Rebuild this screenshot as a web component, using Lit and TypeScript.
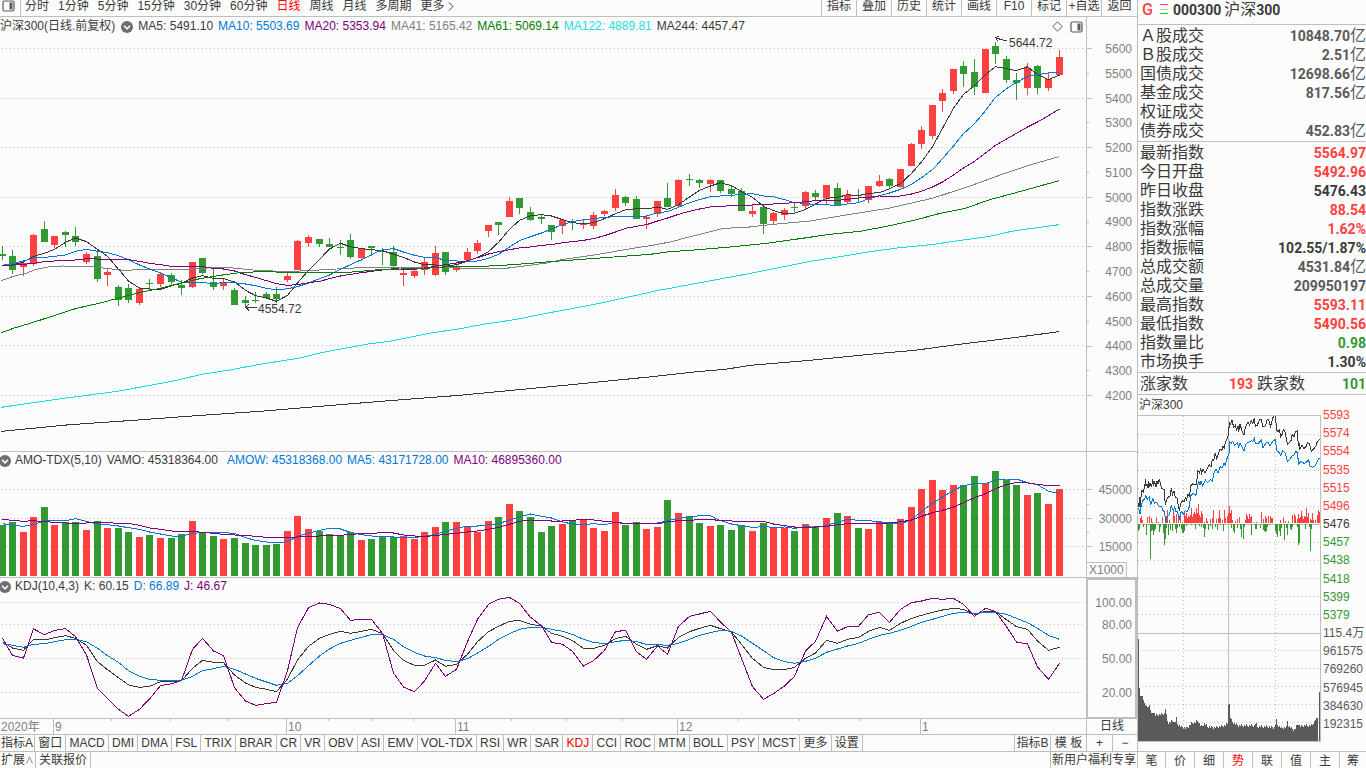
import { LitElement, html, svg, css } from "lit";
import { customElement, property } from "lit/decorators.js";
import { classMap } from "lit/directives/class-map.js";

// Plot coordinates are stored in thirds of a pixel, counted from the top of the window.
const STEP = 10.57;
const xAt = (i: number) => Math.floor(2 + i * STEP) * 3 + 1.5;

type Candle = ["R" | "G", number, number, number, number];

const parseCandles = (s: string): Candle[] =>
  s.trim().split(/\s+/).map((t) => {
    const [h, l, a, b] = t.slice(1).split(",").map(Number);
    return [t[0] as "R" | "G", h, l, a, b];
  });

// direction, high, low, body top, body bottom
const CANDLES = parseCandles(`
G738,780,762,768 G750,822,768,810 R786,827,789,801 R702,797,705,792 G663,726,687,726
R708,743,708,735 G693,740,696,705 G681,738,708,726 R756,792,762,786 G748,846,768,837
R806,858,816,825 G855,918,861,900 G852,909,864,900 R865,915,867,909 G837,870,849,852
R819,862,822,852 G818,855,825,846 G840,885,855,864 R786,864,786,861 G774,822,774,819
G805,870,846,861 R836,870,849,858 G864,915,870,915 G888,922,900,909 G876,909,900,903
G876,894,882,894 G861,910,882,897 R819,846,828,840 R720,810,723,810 R705,741,711,729
G717,741,717,732 G714,741,732,741 G720,765,741,744 G702,777,720,771 R744,783,744,774
G738,768,738,744 G744,795,753,756 G738,801,756,798 R810,858,819,825 R807,834,813,828
R772,825,786,810 R738,828,759,825 G756,825,756,816 R786,816,798,810 R744,780,756,780
R720,762,729,753 R675,711,675,693 G666,705,666,675 R591,651,603,651 G594,642,594,624
G621,663,636,660 G645,672,651,657 G675,720,675,696 R657,702,660,678 G657,690,663,669
R657,687,672,675 R636,687,645,678 R630,648,633,642 R567,633,585,624 G588,618,591,609
G588,657,597,657 R645,687,651,657 R603,651,603,642 G549,621,594,621 R537,621,540,618
G522,558,537,540 G537,564,540,549 R537,576,540,552 G540,579,540,573 G558,591,567,582
G564,633,573,633 R615,651,633,642 G615,702,621,672 R636,672,639,663 R624,660,630,645
G609,636,621,624 R573,627,576,618 G570,604,579,591 R555,612,555,594 G549,618,564,615
R570,612,585,606 G567,606,585,588 R558,609,558,600 R525,561,543,558 G534,564,537,558
R507,564,507,561 R429,498,432,498 R378,447,390,432 R315,417,315,408 R267,336,279,303
R207,282,207,273 G183,261,198,222 G177,285,216,261 R147,279,147,279 G126,192,138,162
G168,249,177,240 G219,300,240,249 R189,285,204,264 G195,282,198,264 R219,273,237,265
R150,225,171,225`);

const nums = (s: string) => s.trim().split(/[\s,]+/).map(Number);
const shift = (a: number[], d: number) => a.map((v) => v + d);

const VOL_TOPS = shift(nums(`240,231,261,216,186,240,231,232,255,228,249,249,261,276,270,279,279,267,228,263,
273,282,279,294,300,300,297,258,213,252,258,267,272,261,285,282,277,277,273,282,
261,246,231,231,245,260,228,216,177,198,216,261,243,237,228,225,249,258,201,240,
231,252,246,165,204,213,234,243,240,255,240,258,234,249,249,258,237,243,219,204,
213,249,252,231,231,222,186,132,105,135,120,120,93,114,78,105,120,150,144,177,132`), 1335);

const J = shift(nums(`580,631,639,552,569,556,551,575,630,730,760,793,814,793,762,722,716,707,613,580,
618,632,728,768,781,776,772,677,548,488,474,478,491,526,523,523,565,684,726,740,
708,655,694,673,590,523,478,463,457,475,517,542,592,598,619,663,647,616,560,556,
620,643,603,628,544,514,507,499,531,562,640,725,763,746,723,694,618,589,514,559,
545,544,509,502,532,493,473,468,460,463,460,478,514,490,499,545,591,597,666,703,655`), 1335);

const K = shift(nums(`590,609,616,583,585,578,572,580,601,650,674,698,720,727,724,710,710,707,670,646,
652,653,690,714,727,733,740,702,645,604,580,568,559,565,559,553,566,616,646,661,
661,645,664,658,628,590,560,544,529,526,538,543,565,574,587,610,610,601,581,574,
598,613,602,609,577,560,550,541,551,561,598,640,667,674,674,667,640,624,586,595,
583,577,559,547,556,535,520,511,502,495,490,493,508,499,500,524,545,553,588,616,607`), 1335);

const D = shift(nums(`596,601,607,598,596,590,584,583,590,610,632,652,677,694,703,706,706,706,694,677,
671,664,673,687,700,711,721,715,692,662,633,612,595,586,577,569,569,583,605,622,
633,638,646,650,641,624,604,583,566,553,547,547,553,559,568,583,592,596,590,586,
590,598,599,601,595,583,571,563,556,559,573,595,617,638,650,655,649,640,622,612,
603,595,583,571,565,556,544,532,523,514,505,502,506,502,502,508,520,533,550,571,583`), 1335);

const average = (values: number[], n: number, head: number[]) =>
  values.map((_, i) =>
    i < n - 1 ? head[i] : values.slice(i - n + 1, i + 1).reduce((a, b) => a + b, 0) / n
  );

const CLOSES = CANDLES.map(([dir, , , top, bottom]) => (dir === "R" ? top : bottom));
const MA5 = average(CLOSES, 5, [795, 795, 786, 769]);
const MA10 = average(CLOSES, 10, [796, 790, 783, 774, 772, 769, 765, 754, 748]);
const MA20 = average(CLOSES, 20, [797, 795, 793, 790, 785, 783, 781, 780, 776, 777, 777, 778, 779, 784, 790, 794, 799, 799, 800]);
const VMA5 = average(VOL_TOPS, 5, shift([236, 241, 244, 239], 1335));
const VMA10 = average(VOL_TOPS, 10, shift([223, 226, 229, 227, 230, 232, 234, 235, 234], 1335));

const MA41 = "4,842 40,829 75,821 105,809 150,800 190,798 265,799 310,804 370,811 450,808 560,808 650,802 700,804 760,810 860,815 940,811 1010,807 1080,803 1380,804 1510,806 1580,797 1640,789 1690,778 1790,764 1880,748 1950,737 2010,726 2090,705 2170,685 2240,682 2300,675 2430,663 2520,648 2670,624 2800,594 2910,558 3020,518 3090,495 3177,470";
const MA61 = "4,998 40,985 100,967 180,941 230,925 300,909 365,892 420,877 480,865 540,850 600,836 660,826 720,818 800,814 840,817 900,818 1030,818 1080,814 1150,808 1260,806 1350,800 1450,799 1540,794 1650,785 1800,774 1950,763 2010,755 2070,751 2180,742 2300,730 2400,716 2490,703 2580,694 2670,677 2750,659 2820,640 2895,625 2970,599 3070,572 3177,542";
const MA122 = "4,1222 190,1195 300,1181 363,1172 516,1144 610,1122 684,1111 779,1093 894,1075 978,1055 1105,1032 1168,1024 1294,999 1380,986 1450,973 1550,958 1650,938 1800,910 1880,892 1910,886 1970,872 2010,865 2090,850 2230,824 2350,800 2430,784 2490,775 2610,755 2700,743 2800,733 2890,720 2970,709 3030,695 3060,690 3177,674";
const MA244 = "4,1294 210,1274 400,1261 589,1247 779,1234 947,1220 1168,1202 1378,1186 1641,1161 1755,1150 1966,1129 2081,1116 2176,1108 2250,1096 2429,1081 2618,1062 2744,1051 2870,1034 3050,1012 3177,995";

const toPoints = (ys: number[]) => ys.map((y, i) => `${xAt(i)},${Math.round(y)}`).join(" ");

const line = (points: string, tone: string) => svg`<polyline class="line ${tone}" points=${points}></polyline>`;
const gridLines = (ys: number[], width: number) =>
  ys.map((y) => svg`<line class="grid" x1="6" x2=${width} y1=${y} y2=${y}></line>`);

const chartColors = css`
  .line { fill: none; stroke-width: 1; vector-effect: non-scaling-stroke; shape-rendering: crispEdges; }
  .dark { stroke: #3a3a3a; }
  .blue { stroke: #0078d4; }
  .purple { stroke: #800080; }
  .gray { stroke: #808080; }
  .green { stroke: #008000; }
  .cyan { stroke: #1edcdc; }
  .grid { stroke: #bebebe; stroke-width: 1; stroke-dasharray: 1 3; vector-effect: non-scaling-stroke; shape-rendering: crispEdges; }
  .rule { stroke: #bebebe; stroke-width: 1; vector-effect: non-scaling-stroke; shape-rendering: crispEdges; }
  .bar { shape-rendering: crispEdges; }
  .up { fill: #ff4040; }
  .down { fill: #339933; }
  .ink { fill: #5a5a5a; }
`;

const controls = css`
  :host { box-sizing: border-box; }
  *, *::before, *::after { box-sizing: border-box; }
  button {
    font: inherit; color: inherit; background: none; border: 0; margin: 0; padding: 0;
    white-space: nowrap; cursor: pointer; line-height: 14px;
  }
  .active { color: #ff0000; }
`;

const chevron = html`<svg width="12" height="12" viewBox="0 0 12 12" aria-hidden="true">
  <circle cx="6" cy="6" r="6" fill="#6e6e6e"></circle>
  <path d="M3 4.8 L6 7.8 L9 4.8" fill="none" stroke="#fff" stroke-width="1.6"></path>
</svg>`;

const paneIcon = html`<svg width="13" height="12" viewBox="0 0 13 12" aria-hidden="true">
  <rect x="1" y="1" width="11" height="10" rx="1.5" fill="none" stroke="#5a5a5a" stroke-width="1.2"></rect>
  <rect x="7.5" y="2.5" width="3" height="7" fill="#5a5a5a"></rect>
</svg>`;

@customElement("top-toolbar")
class TopToolbar extends LitElement {
  static styles = [controls, css`
    :host { display: flex; height: 17px; border-bottom: 1px solid #bebebe; overflow: hidden; }
    .pane { width: 21px; border-right: 1px solid #bebebe; padding: 0 5px 4px 2px; display: flex; align-items: center; }
    .periods { display: flex; gap: 9px; padding: 0 4px; flex: 1; align-items: flex-start; }
    .periods button, .actions button { height: 16px; padding-bottom: 4px; line-height: 12px; }
    .actions { display: flex; }
    .actions button { width: 35px; border-left: 1px solid #bebebe; text-align: center; }
    .actions button:last-child { width: 36px; }
    .more { display: flex; gap: 3px; align-items: center; }
  `];
  render() {
    const periods = ["分时", "1分钟", "5分钟", "15分钟", "30分钟", "60分钟", "日线", "周线", "月线", "多周期"];
    const actions = ["指标", "叠加", "历史", "统计", "画线", "F10", "标记", "+自选", "返回"];
    return html`
      <button class="pane" aria-label="侧栏">${paneIcon}</button>
      <nav class="periods">
        ${periods.map((p) => html`<button class=${classMap({ active: p === "日线" })}>${p}</button>`)}
        <button class="more">更多
          <svg width="6" height="9" viewBox="0 0 6 9" aria-hidden="true"><path d="M1 .5 L5 4.5 L1 8.5" fill="none" stroke="#3a3a3a"></path></svg>
        </button>
      </nav>
      <nav class="actions">${actions.map((a) => html`<button>${a}</button>`)}</nav>
    `;
  }
}

@customElement("chart-legend")
class ChartLegend extends LitElement {
  @property({ attribute: false }) items: Array<[string, string]> = [];
  @property() name = "";
  @property({ type: Boolean }) lead = false;
  static styles = [controls, css`
    :host { display: flex; align-items: center; gap: 5px; height: 17px; white-space: nowrap; line-height: 17px; min-width: 0; }
    .toggle { display: flex; flex: none; margin-left: -1px; margin-right: -1px; }
    .toggle.lead { margin-left: 1px; margin-right: 0; order: 1; }
    .name { order: 1; }
    .lead-name { order: 0; }
    .value { order: 2; }
    .wide { margin-left: 4px; }
    .blue { color: #0078d4; }
    .purple { color: #800080; }
    .gray { color: #808080; }
    .green { color: #008000; }
    .cyan { color: #1edcdc; }
  `];
  render() {
    return html`
      <button class=${classMap({ toggle: true, lead: this.lead })} aria-label="展开">${chevron}</button>
      <span class=${this.lead ? "lead-name" : "name"}>${this.name}</span>
      ${this.items.map(([text, tone]) => html`<span class="value ${tone}">${text}</span>`)}
    `;
  }
}

@customElement("price-panel")
class PricePanel extends LitElement {
  static styles = [chartColors, controls, css`
    :host { display: grid; position: relative; min-height: 0; min-width: 0; grid-template: minmax(0, 1fr) / minmax(0, 1fr); overflow: hidden; }
    .plot { grid-area: 1 / 1; width: 100%; height: 100%; display: block; }
    .head { grid-area: 1 / 1; align-self: start; display: flex; justify-content: space-between; padding: 1px 3px 0 0; height: 18px; }
    .tools { display: flex; gap: 7px; align-items: center; }
    .tools button { display: flex; }
    .note { position: absolute; transform: translateY(-50%); line-height: 14px; }
  `];
  render() {
    const items: Array<[string, string]> = [
      ["MA5: 5491.10", "dark"], ["MA10: 5503.69", "blue"], ["MA20: 5353.94", "purple"], ["MA41: 5165.42", "gray"],
      ["MA61: 5069.14", "green"], ["MA122: 4889.81", "cyan"], ["MA244: 4457.47", "dark"],
    ];
    const notes = [
      { text: "4554.72", x: 258, y: 309 },
      { text: "5644.72", x: 1009, y: 43 },
    ];
    return html`
      <svg class="plot" viewBox="0 51 3258 1302" preserveAspectRatio="none" role="img" aria-label="K线图">
        ${gridLines([145.5, 295.5, 442.5, 592.5, 739.5, 889.5, 1036.5, 1186.5], 3258)}
        ${CANDLES.map(([dir, high, low, top, bottom], i) => {
          const x = xAt(i);
          const tone = dir === "R" ? "bar up" : "bar down";
          return svg`
            <rect class=${tone} x=${x - 1.5} y=${high} width="3" height=${low - high}></rect>
            <rect class=${tone} x=${x - 10.5} y=${top} width="21" height=${Math.max(3, bottom - top)}></rect>`;
        })}
        ${line(MA41, "gray")} ${line(toPoints(MA5), "dark")} ${line(toPoints(MA10), "blue")}
        ${line(toPoints(MA20), "purple")} ${line(MA61, "green")} ${line(MA122, "cyan")} ${line(MA244, "dark")}
        ${line("771,922 735,922", "dark")} ${line("747,913 736,922 747,931", "dark")}
        ${line("3021,123 2987,114", "dark")} ${line("2997,108 2987,113 2992,123", "dark")}
      </svg>
      <div class="head">
        <chart-legend lead .name=${"沪深300(日线.前复权)"} .items=${items}></chart-legend>
        <div class="tools">
          <button aria-label="标记"><svg width="11" height="11" viewBox="0 0 11 11"><path d="M5.5 .8 L10.2 5.5 L5.5 10.2 L.8 5.5 Z" fill="none" stroke="#5a5a5a"></path></svg></button>
          <button aria-label="侧栏">${paneIcon}</button>
        </div>
      </div>
      ${notes.map((n) => html`<span class="note" style="left:${(n.x / 1086) * 100}%;top:${((n.y - 17) / 434) * 100}%">${n.text}</span>`)}
    `;
  }
}

@customElement("volume-panel")
class VolumePanel extends LitElement {
  static styles = [chartColors, controls, css`
    :host { display: grid; min-height: 0; min-width: 0; grid-template: minmax(0, 1fr) / minmax(0, 1fr); overflow: hidden; }
    .plot { grid-area: 1 / 1; width: 100%; height: 100%; display: block; }
    chart-legend { grid-area: 1 / 1; align-self: start; }
  `];
  render() {
    const items: Array<[string, string]> = [
      ["VAMO: 45318364.00", "dark"], ["AMOW: 45318368.00", "blue wide"], ["MA5: 43171728.00", "blue"], ["MA10: 46895360.00", "purple"],
    ];
    return html`
      <svg class="plot" viewBox="0 1356 3258 375" preserveAspectRatio="none" role="img" aria-label="成交额">
        ${gridLines([1468.5, 1555.5, 1639.5], 3258)}
        ${VOL_TOPS.map((top, i) => svg`<rect class=${CANDLES[i][0] === "R" ? "bar up" : "bar down"} x=${xAt(i) - 10.5} y=${top} width="21" height=${1728 - top}></rect>`)}
        ${line(toPoints(VMA5), "blue")} ${line(toPoints(VMA10), "purple")}
      </svg>
      <chart-legend .name=${"AMO-TDX(5,10)"} .items=${items}></chart-legend>
    `;
  }
}

@customElement("kdj-panel")
class KdjPanel extends LitElement {
  static styles = [chartColors, controls, css`
    :host { display: grid; min-height: 0; min-width: 0; grid-template: minmax(0, 1fr) / minmax(0, 1fr); overflow: hidden; }
    .plot { grid-area: 1 / 1; width: 100%; height: 100%; display: block; }
    chart-legend { grid-area: 1 / 1; align-self: start; }
  `];
  render() {
    const items: Array<[string, string]> = [["K: 60.15", "dark"], ["D: 66.89", "blue"], ["J: 46.67", "purple"]];
    return html`
      <svg class="plot" viewBox="0 1734 3258 420" preserveAspectRatio="none" role="img" aria-label="KDJ">
        ${gridLines([1807.5, 1873.5, 1975.5, 2077.5], 3249)}
        ${line(toPoints(K), "dark")} ${line(toPoints(D), "blue")} ${line(toPoints(J), "purple")}
      </svg>
      <chart-legend .name=${"KDJ(10,4,3)"} .items=${items}></chart-legend>
    `;
  }
}

@customElement("time-axis")
class TimeAxis extends LitElement {
  static styles = [chartColors, controls, css`
    :host { display: grid; min-width: 0; grid-template: minmax(0, 1fr) / minmax(0, 1fr); overflow: hidden; color: #808080; }
    .months { grid-area: 1 / 1; display: grid; grid-template-columns: 53fr 233fr 169fr 222fr 243fr 166fr; line-height: 16px; }
    .months span { border-left: 1px solid #bebebe; padding-left: 1px; }
    .months span:first-child { border-left: 0; }
    .ticks { grid-area: 1 / 1; width: 100%; height: 2px; display: block; }
  `];
  render() {
    const ticks = [111, 170, 228, 328, 371, 413, 511, 566, 622, 738, 799, 859];
    return html`
      <div class="months">${["2020年", "9", "10", "11", "12", "1"].map((m) => html`<span>${m}</span>`)}</div>
      <svg class="ticks" viewBox="0 0 1086 2" preserveAspectRatio="none" aria-hidden="true">
        ${ticks.map((x) => svg`<line class="rule" x1=${x + 0.5} x2=${x + 0.5} y1="0" y2="2"></line>`)}
      </svg>
    `;
  }
}

@customElement("indicator-tabs")
class IndicatorTabs extends LitElement {
  static styles = [controls, css`
    :host { display: flex; justify-content: space-between; min-width: 0; overflow: hidden; }
    .set { display: flex; flex: 0 1 863px; }
    .set button { flex: 1 0 auto; padding: 0 3px; border-right: 1px solid #bebebe; }
    .set button:first-child { flex-grow: 0; padding: 0 1px; }
    .end { display: flex; }
    .end button { width: 36px; border-left: 1px solid #bebebe; }
    button { height: 16px; line-height: 16px; }
  `];
  render() {
    const names = ["指标A", "窗口", "MACD", "DMI", "DMA", "FSL", "TRIX", "BRAR", "CR", "VR", "OBV", "ASI", "EMV", "VOL-TDX",
      "RSI", "WR", "SAR", "KDJ", "CCI", "ROC", "MTM", "BOLL", "PSY", "MCST", "更多", "设置"];
    return html`
      <nav class="set">${names.map((n) => html`<button class=${classMap({ active: n === "KDJ" })}>${n}</button>`)}</nav>
      <div class="end"><button>指标B</button><button>模 板</button></div>
    `;
  }
}

const PRICE_BLACK = "8,280 9,292 12,262 12,285 15,262 18,240 22,246 26,228 29,208 30,228 33,222 36,234 38,212 41,232 44,222 47,230 50,206 53,228 56,214 60,230 63,212 66,222 70,208 74,226 78,236 84,238 86,262 88,285 92,268 96,262 102,258 106,233 109,254 114,242 118,262 124,264 127,290 130,298 134,282 138,272 144,276 148,264 152,270 156,252 160,258 165,226 170,222 180,224 184,200 186,182 190,188 194,176 197,190 201,178 207,188 212,178 220,164 225,172 229,148 233,152 238,128 242,146 248,128 252,118 257,122 261,108 265,114 268,98 274,85 278,72 280,35 282,46 288,30 293,52 298,46 302,60 306,48 308,65 312,43 318,62 324,74 328,52 336,36 341,46 346,32 351,40 355,24 358,50 364,46 370,30 376,28 380,50 388,48 394,28 398,30 404,50 410,24 416,16 419,16 421,60 426,64 430,60 434,80 438,74 442,58 448,68 454,103 460,98 466,90 468,74 474,80 478,66 484,62 487,108 490,100 492,118 498,106 504,116 512,108 514,98 520,100 526,124 534,116 540,108 544,94 551,88";
const PRICE_BLUE = "8,295 12,312 12,285 15,290 20,272 26,268 29,254 33,268 40,260 44,284 50,266 56,280 62,276 68,288 76,290 82,304 86,306 89,338 94,320 100,314 106,288 112,302 116,290 120,306 124,304 130,326 136,304 142,312 148,302 154,304 160,290 164,258 172,250 180,256 184,230 188,212 192,226 195,214 200,228 208,210 214,218 224,208 229,214 234,190 240,178 246,188 252,170 258,174 264,160 268,164 274,142 279,130 281,95 286,100 290,94 296,106 304,98 308,110 312,98 318,112 324,122 330,102 338,96 346,92 350,94 355,84 358,102 366,100 376,90 381,114 390,98 396,96 402,108 410,94 418,88 422,122 430,128 434,136 440,122 448,130 454,154 462,148 468,138 474,136 480,124 484,128 488,162 496,154 504,160 512,156 518,150 522,168 530,172 538,168 542,158 548,146 551,146";
const UP_BARS = nums(`12,16 15,22 18,8 33,18 39,22 45,16 48,4 60,18 66,4 78,18 90,22 93,38 99,8 111,42 114,20 120,28 126,18 132,22 138,4 144,36
147,22 150,30 153,16 156,20 159,18 162,24 165,46 168,18 171,26 174,34 177,28 180,46 183,30 186,56 189,24 192,18 195,36 198,28 204,4 210,14 213,6 222,12 228,16 231,38 240,12 246,14 249,38
252,16 258,8 264,38 267,16 273,20 276,30 279,52 282,30 285,38 288,10 297,6 303,12 309,18 327,8 330,28 333,20 336,12 339,26 342,18 345,22 354,4 360,4 375,34 381,12 387,20 390,16 396,20 402,22 405,14 408,16
432,8 441,18 447,6 456,6 468,24 474,28 477,20 483,12 486,28 489,14 492,18 495,36 498,20 501,12 504,22 507,18 510,46 513,18 516,30 522,12 525,10 528,30 531,8 537,10 543,24 546,38 549,34`);
const DOWN_BARS = nums(`6,22 9,16 21,10 30,32 36,4 42,106 45,20 48,18 51,32 54,20 57,14 69,24 72,10 81,26 84,62 87,46 90,12 96,34 102,18 108,22 117,14 120,28 123,12 129,10 135,14 138,28 141,28 144,20 150,6 165,4 177,14 189,6
195,10 201,12 204,40 207,16 216,18 222,6 228,16 237,10 243,18 252,4 261,20 285,12 291,20 294,28 303,12 312,16 315,38 321,46 324,8 345,32 357,14 360,16 372,12 381,18 384,22 387,24 390,20 393,8 399,4 417,22 420,30 423,40 429,20 432,36 435,12 444,48
450,12 453,34 462,14 465,18 468,10 483,8 486,62 489,58 507,14 519,8 522,80 525,16`);
const TURNOVER = nums(`26,797 29,942 32,968 38,966 42,985 50,998 60,990 64,1018 72,1010 76,1020 104,1017 107,1000 112,1035 118,1045 130,1035 136,1045 139,1025 143,1048 152,1055 170,1060 186,1045 205,1038 215,1055 225,1045 232,1055
255,1058 270,1055 288,1050 294,1046 297,955 301,1025 306,1040 312,1045 325,1052 375,1052 378,1042 382,1055 405,1055 436,1058 439,1030 443,1050 455,1060 470,1058 473,1038 477,1055 495,1065 505,1045 510,1055 530,1052 548,1050 556,1035 562,1030 566,1027`);

const pairs = (a: number[]) => a.reduce<number[][]>((out, v, i) => (i % 2 ? (out[out.length - 1].push(v), out) : [...out, [v]]), []);

const turnoverBars = () => {
  const pts = pairs(TURNOVER);
  const bars: Array<[number, number]> = [];
  for (let x = 6; x < 546; x += 3) {
    const at = x + 20;
    const n = Math.max(1, pts.findIndex((p) => p[0] >= at));
    const [x0, y0] = pts[n - 1];
    const [x1, y1] = pts[n];
    const t = Math.min(1, Math.max(0, (at - x0) / (x1 - x0)));
    bars.push([x, y0 + (y1 - y0) * t - 105 + (x > 30 ? ((x / 3) * 7) % 5 : 0) * 2 - 4]);
  }
  return bars;
};

@customElement("intraday-chart")
class IntradayChart extends LitElement {
  static styles = [chartColors, controls, css`
    :host { display: flex; flex-direction: column; min-height: 0; }
    .name { line-height: 20px; padding-left: 1px; height: 20px; flex: none; }
    .body { flex: 1; min-height: 0; display: flex; padding-bottom: 9px; }
    .plot { flex: 0 0 183px; width: 183px; height: 100%; border-top: 1px solid #bebebe; border-right: 1px solid #bebebe; border-bottom: 1px solid #bebebe; }
    .scale { margin: -7px 0 0 2px; display: flex; flex-direction: column; justify-content: space-between; list-style: none; padding: 0 0 11px; line-height: 14px; white-space: nowrap; }
    .scale li { height: 14px; }
    .rise { color: #ff4040; }
    .fall { color: #339933; }
    .volume { color: #5a5a5a; }
  `];
  render() {
    const labels: Array<[string, string]> = [
      ["5593", "rise"], ["5574", "rise"], ["5554", "rise"], ["5535", "rise"], ["5515", "rise"], ["5496", "rise"], ["5476", ""],
      ["5457", "fall"], ["5438", "fall"], ["5418", "fall"], ["5399", "fall"], ["5379", "fall"],
      ["115.4万", "volume"], ["961575", "volume"], ["769260", "volume"], ["576945", "volume"], ["384630", "volume"], ["192315", "volume"],
    ];
    return html`
      <div class="name">沪深300</div>
      <div class="body">
        <svg class="plot" viewBox="6 18 546 975" preserveAspectRatio="none" role="img" aria-label="分时走势">
          ${gridLines([73.5, 127.5, 181.5, 235.5, 289.5, 397.5, 451.5, 505.5, 559.5, 613.5, 721.5, 775.5, 829.5, 883.5, 937.5], 552)}
          ${[142.5, 418.5].map((x) => svg`<line class="grid" x1=${x} x2=${x} y1="18" y2="993"></line>`)}
          <line class="rule" x1="277.5" x2="277.5" y1="18" y2="993"></line>
          <line class="rule" x1="6" x2="552" y1="343.5" y2="343.5"></line>
          <line class="rule" x1="6" x2="552" y1="670.5" y2="670.5"></line>
          ${pairs(UP_BARS).map(([x, h]) => svg`<rect class="bar up" x=${x} y=${339 - h} width="3" height=${h}></rect>`)}
          ${pairs(DOWN_BARS).map(([x, h]) => svg`<rect class="bar down" x=${x} y="342" width="3" height=${h}></rect>`)}
          ${turnoverBars().map(([x, y]) => svg`<rect class="bar ink" x=${x} y=${y} width="3" height=${993 - y}></rect>`)}
          <rect class="bar ink" x="549" y="846" width="3" height="147"></rect>
          ${line(PRICE_BLUE, "blue")} ${line(PRICE_BLACK, "dark")}
        </svg>
        <ul class="scale">${labels.map(([t, tone]) => html`<li class=${tone}>${t}</li>`)}</ul>
      </div>
    `;
  }
}

@customElement("quote-sidebar")
class QuoteSidebar extends LitElement {
  static styles = [controls, css`
    :host { display: flex; flex-direction: column; min-height: 0; border-left: 1px solid #bebebe; overflow: hidden; font-size: 16px; }
    b { font: 700 14px/14px Roboto, "Liberation Sans", sans-serif; }
    .title { height: 25px; flex: none; display: flex; align-items: center; padding: 0 0 5px 4px; border-bottom: 1px solid #bebebe; white-space: nowrap; margin: 0; font-size: 16px; font-weight: 400; line-height: 19px; }
    .title svg { margin: 0 5px 0 7px; flex: none; }
    .title span { margin-left: 3px; }
    .flag { color: #ff4040; font-style: normal; font-family: Roboto, "Liberation Sans", sans-serif; font-weight: 500; width: 11px; }
    table { border-collapse: collapse; width: 100%; }
    .group { border-bottom: 1px solid #bebebe; padding: 1px 0; flex: none; }
    th, td { padding: 0; height: 19px; line-height: 18px; white-space: nowrap; }
    th { text-align: left; font-weight: 400; padding-left: 2px; }
    td { text-align: right; color: #5a5a5a; }
    .red { color: #ff4040; }
    .grn { color: #339933; }
    .blk { color: #3a3a3a; }
    .breadth { display: grid; grid-template-columns: 65px 48px 1fr auto; height: 22px; align-items: center; border-bottom: 1px solid #bebebe; padding-left: 2px; line-height: 21px; flex: none; }
    .breadth b { text-align: right; }
    .breadth span + b + span { padding-left: 4px; }
    intraday-chart { flex: 1; font-size: 12px; }
    .tabs { display: flex; height: 17px; flex: none; border-top: 1px solid #bebebe; font-size: 12px; }
    .tabs button { flex: 0 0 29px; border-right: 1px solid #bebebe; line-height: 18px; }
    .tabs button:first-child { flex-basis: 28px; }
    .tabs button:last-child { flex: 1; border-right: 0; }
  `];
  render() {
    const turnover = [["Ａ股成交", "10848.70"], ["Ｂ股成交", "2.51"], ["国债成交", "12698.66"], ["基金成交", "817.56"], ["权证成交", ""], ["债券成交", "452.83"]];
    const index = [
      ["最新指数", "5564.97", "red", ""], ["今日开盘", "5492.96", "red", ""], ["昨日收盘", "5476.43", "blk", ""], ["指数涨跌", "88.54", "red", ""],
      ["指数涨幅", "1.62%", "red", ""], ["指数振幅", "102.55/1.87%", "blk", ""], ["总成交额", "4531.84", "", "亿"], ["总成交量", "209950197", "", ""],
      ["最高指数", "5593.11", "red", ""], ["最低指数", "5490.56", "red", ""], ["指数量比", "0.98", "grn", ""], ["市场换手", "1.30%", "blk", ""],
    ];
    return html`
      <h1 class="title">
        <i class="flag">G</i>
        <svg width="8" height="11" viewBox="0 0 8 11" shape-rendering="crispEdges" aria-hidden="true">
          <path d="M0 .5H8" stroke="#ff4040"></path><path d="M0 5.5H8" stroke="#bebebe"></path><path d="M0 9.5H8" stroke="#00e000"></path>
        </svg>
        <b>000300</b><span>沪深</span><b>300</b>
      </h1>
      <div class="group"><table>
        ${turnover.map(([k, v]) => html`<tr><th scope="row">${k}</th><td>${v ? html`<b>${v}</b>亿` : ""}</td></tr>`)}
      </table></div>
      <div class="group"><table>
        ${index.map(([k, v, tone, unit]) => html`<tr><th scope="row">${k}</th><td class=${tone}><b>${v}</b>${unit}</td></tr>`)}
      </table></div>
      <div class="breadth"><span>涨家数</span><b class="red">193</b><span>跌家数</span><b class="grn">101</b></div>
      <intraday-chart></intraday-chart>
      <nav class="tabs">${["笔", "价", "细", "势", "联", "值", "主", "筹"].map((t) => html`<button class=${classMap({ active: t === "势" })}>${t}</button>`)}</nav>
    `;
  }
}

@customElement("app-root")
class AppRoot extends LitElement {
  static styles = [chartColors, controls, css`
    :host {
      display: grid; grid-template: minmax(0, 1fr) / minmax(0, 1fr) 229px; height: 100vh; overflow: hidden;
      background: #fcfcfc; color: #3a3a3a; font: 12px "Liberation Sans", "Noto Sans CJK SC", sans-serif;
    }
    .main {
      display: grid; grid-template-columns: minmax(0, 1fr) 51px; min-height: 0;
      grid-template-rows: 17px minmax(0, 435fr) minmax(0, 126fr) minmax(0, 141fr) 16px 17px 16px;
    }
    .full { grid-column: 1 / -1; }
    .ruled { border-bottom: 1px solid #bebebe; }
    .axis { border-left: 1px solid #bebebe; min-height: 0; display: grid; grid-template: minmax(0, 1fr) / 15px minmax(0, 1fr); color: #808080; }
    .axis svg { grid-area: 1 / 1; width: 15px; height: 100%; display: block; }
    .labels { grid-area: 1 / 1 / 2 / 3; display: flex; flex-direction: column; justify-content: space-between; align-items: flex-end; padding: 25px 5px 48px 0; margin: 0; list-style: none; line-height: 14px; }
    .volume-axis { grid-template-rows: minmax(0, 1fr) 15px; }
    .volume-axis svg { grid-row: 1 / 3; }
    .volume-axis .labels { padding: 31px 5px 8px 0; }
    .unit { grid-row: 2; grid-column: 1 / 3; justify-self: start; border: 1px solid #bebebe; border-width: 1px 1px 0 0; padding: 0 2px; line-height: 14px; }
    .kdj-axis { border: 2px solid #bebebe; }
    .kdj-axis .labels { display: grid; grid-template: 22fr 34fr 34fr 14px / minmax(0, 1fr); align-items: start; justify-items: end; padding: 16px 3px 17px 0; }
    .period { border-left: 1px solid #bebebe; text-align: center; line-height: 15px; }
    .zoom { border-left: 1px solid #bebebe; display: grid; grid-template-columns: 1fr 1fr; }
    .zoom button + button { border-left: 1px solid #bebebe; }
    .foot { display: flex; overflow: hidden; }
    .foot button { border-right: 1px solid #bebebe; line-height: 18px; height: 16px; padding: 0 3px; display: flex; align-items: center; gap: 1px; }
    .foot button:first-child { padding: 0 2px 0 1px; }
    .foot .promo { margin-left: auto; border-right: 0; border-left: 1px solid #bebebe; padding: 0 1px; }
  `];
  render() {
    const prices = Array.from({ length: 15 }, (_, i) => 5600 - i * 100);
    return html`
      <main class="main">
        <top-toolbar class="full"></top-toolbar>
        <price-panel class="ruled"></price-panel>
        <div class="axis ruled">
          <svg viewBox="0 51 15 1302" preserveAspectRatio="none" aria-hidden="true">
            ${prices.map((_, i) => svg`<line class="rule" x1="0" x2=${i % 2 ? 2 : 5} y1=${145.5 + i * 74.4} y2=${145.5 + i * 74.4}></line>`)}
          </svg>
          <ul class="labels">${prices.map((p) => html`<li>${p}</li>`)}</ul>
        </div>
        <volume-panel class="ruled"></volume-panel>
        <div class="axis volume-axis ruled">
          <svg viewBox="0 1356 15 375" preserveAspectRatio="none" aria-hidden="true">
            ${[1468.5, 1513.5, 1555.5, 1597.5, 1639.5].map((y, i) => svg`<line class="rule" x1="0" x2=${i % 2 ? 2 : 5} y1=${y} y2=${y}></line>`)}
          </svg>
          <ul class="labels"><li>45000</li><li>30000</li><li>15000</li></ul>
          <span class="unit">X1000</span>
        </div>
        <kdj-panel class="ruled"></kdj-panel>
        <div class="axis kdj-axis">
          <ul class="labels"><li>100.00</li><li>80.00</li><li>50.00</li><li>20.00</li></ul>
        </div>
        <time-axis class="ruled"></time-axis>
        <div class="period ruled">日线</div>
        <indicator-tabs class="ruled"></indicator-tabs>
        <div class="zoom ruled"><button aria-label="放大">+</button><button aria-label="缩小">−</button></div>
        <div class="foot full">
          <button>扩展
            <svg width="7" height="8" viewBox="0 0 7 8" aria-hidden="true"><path d="M.5 7.5 L3.5 .8 L6.5 7.5" fill="none" stroke="#909090"></path></svg>
          </button>
          <button>关联报价</button>
          <button class="promo">新用户福利专享</button>
        </div>
      </main>
      <quote-sidebar></quote-sidebar>
    `;
  }
}
